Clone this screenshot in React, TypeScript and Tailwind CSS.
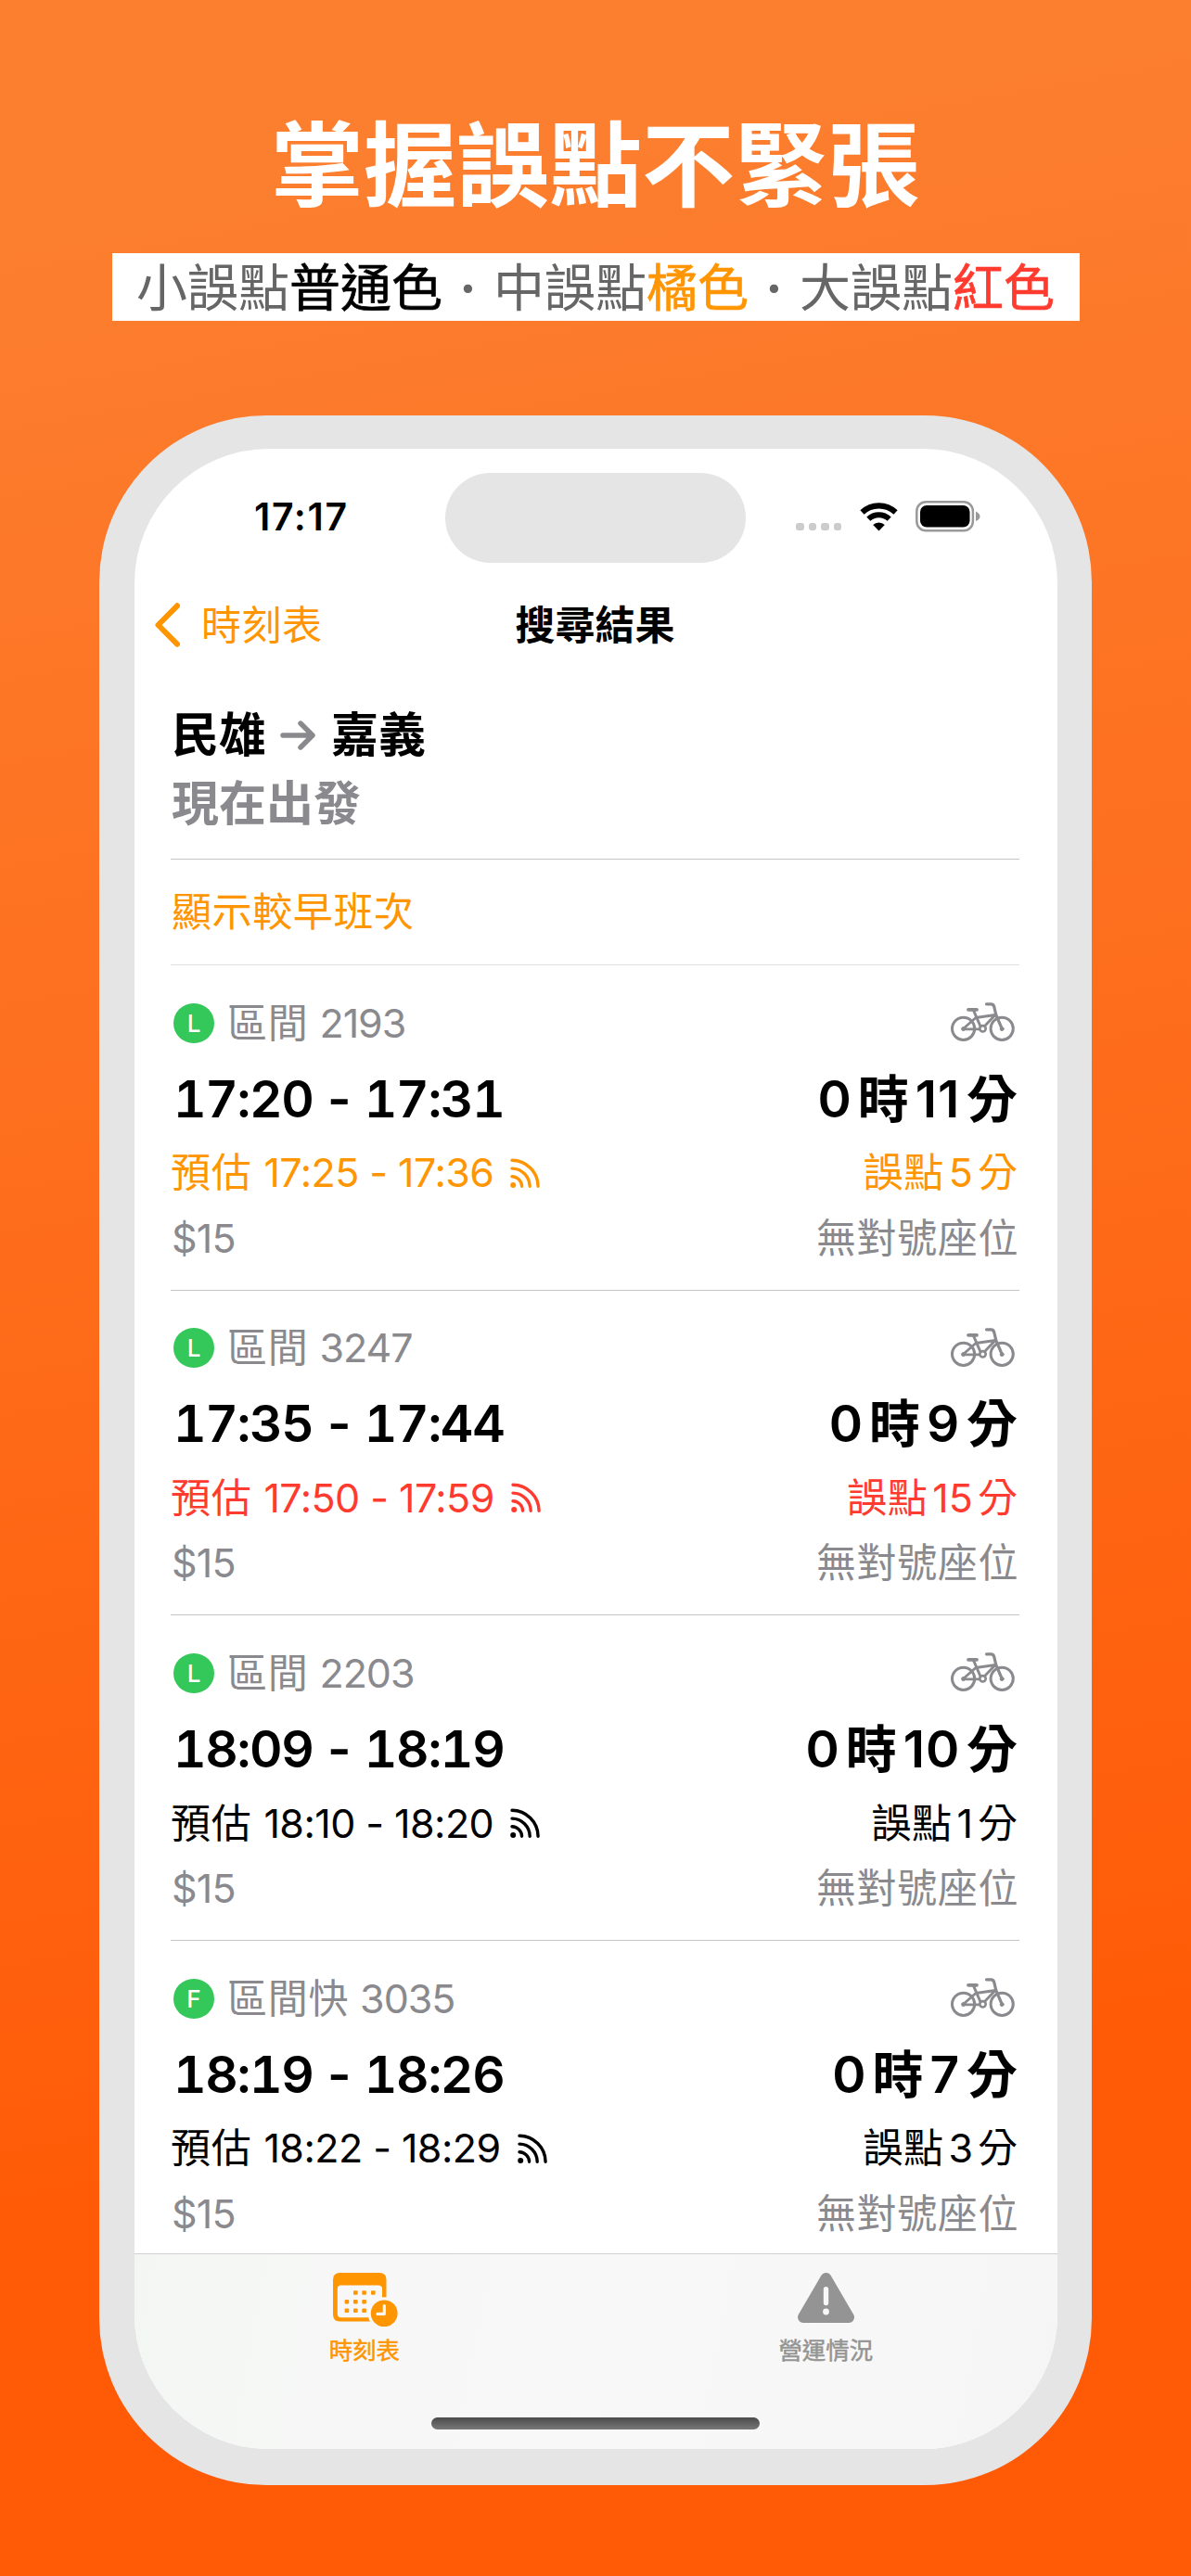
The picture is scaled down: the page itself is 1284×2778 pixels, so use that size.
import type { ReactNode } from "react";

type Tone = "normal" | "late" | "veryLate";

interface Train {
    badge: string;
    kind: string;
    number: string;
    time: string;
    hours: string;
    minutes: string;
    estimate: string;
    delay: string;
    tone: Tone;
}

const trains: Train[] = [
    { badge: "L", kind: "區間", number: "2193", time: "17:20 - 17:31", hours: "0", minutes: "11", estimate: "17:25 - 17:36", delay: "5", tone: "late" },
    { badge: "L", kind: "區間", number: "3247", time: "17:35 - 17:44", hours: "0", minutes: "9", estimate: "17:50 - 17:59", delay: "15", tone: "veryLate" },
    { badge: "L", kind: "區間", number: "2203", time: "18:09 - 18:19", hours: "0", minutes: "10", estimate: "18:10 - 18:20", delay: "1", tone: "normal" },
    { badge: "F", kind: "區間快", number: "3035", time: "18:19 - 18:26", hours: "0", minutes: "7", estimate: "18:22 - 18:29", delay: "3", tone: "normal" },
];

const toneClass: Record<Tone, string> = {
    normal: "text-black",
    late: "text-[#ff9500]",
    veryLate: "text-[#ff3b30]",
};

function WifiIcon() {
    return (
        <svg viewBox="0 0 41 32" className="w-[41px] h-[32px]">
            <path d="M2.5 11.6 A26 26 0 0 1 38.5 11.6" fill="none" stroke="black" strokeWidth="6.2" />
            <path d="M9.3 18.6 A16.4 16.4 0 0 1 31.7 18.6" fill="none" stroke="black" strokeWidth="6" />
            <path d="M20.5 31.5 L14.2 25 A9 9 0 0 1 26.8 25 Z" fill="black" />
        </svg>
    );
}

function BatteryIcon() {
    return (
        <svg viewBox="0 0 70 34" className="w-[70px] h-[34px]">
            <rect x="1.3" y="1.3" width="60.6" height="31" rx="10" fill="none" stroke="#999999" strokeWidth="2.5" />
            <rect x="5" y="5" width="53.5" height="23.5" rx="7" fill="black" />
            <path d="M65 11.5 C71 14.5 71 19.5 65 22 Z" fill="#999999" />
        </svg>
    );
}

function FeedIcon() {
    return (
        <svg viewBox="0 0 32 32" className="w-[32px] h-[32px]" fill="none" stroke="currentColor" strokeWidth="3.4" strokeLinecap="round">
            <circle cx="3.2" cy="29" r="3" fill="currentColor" stroke="none" />
            <path d="M2 19.7 A11 11 0 0 1 12.6 30.2" />
            <path d="M2 11.1 A19.5 19.5 0 0 1 21.2 30.2" />
            <path d="M2 2.2 A28.4 28.4 0 0 1 30.1 30.2" />
        </svg>
    );
}

function BikeIcon() {
    return (
        <svg viewBox="0 0 69 42" className="w-[69px] h-[42px]" fill="none" stroke="#8a8a8e" strokeLinecap="round" strokeLinejoin="round">
            <circle cx="13.6" cy="28.3" r="12.1" strokeWidth="3" />
            <circle cx="55.2" cy="28.3" r="12.1" strokeWidth="3" />
            <path d="M13.6 28.8 H33.5 L48 13.5 L27 16.5 L13.6 28.3" strokeWidth="2.8" />
            <path d="M19 7.8 H28" strokeWidth="3.8" />
            <path d="M24.5 8.5 L32.5 27" strokeWidth="3" />
            <path d="M38.5 1.8 H43.5 Q46 1.8 46.8 4.8 L48.8 13.5 L55.2 28.3" strokeWidth="3.2" />
            <circle cx="34.5" cy="28.3" r="3.2" strokeWidth="2.6" fill="white" />
            <circle cx="13.6" cy="28.6" r="2" strokeWidth="1" fill="#8a8a8e" />
            <circle cx="55.2" cy="28.6" r="2" strokeWidth="1" fill="#8a8a8e" />
        </svg>
    );
}

function CalendarClockIcon() {
    return (
        <svg viewBox="0 0 70 58" className="w-[70px] h-[58px]">
            <path
                fillRule="evenodd"
                fill="#ff9500"
                d="M7.5 0 H50 Q57.5 0 57.5 7.5 V52.5 H7.5 Q0 52.5 0 45 V7.5 Q0 0 7.5 0 Z M8.5 13.5 Q4.8 13.5 4.8 17 V44.5 Q4.8 48.2 8.5 48.2 H53 V17 Q53 13.5 49 13.5 Z"
            />
            <circle cx="55.2" cy="43.8" r="17.6" fill="#f7f8f7" />
            <g fill="#ff9500">
                {[22, 31.3, 41].map((x) => <rect key={x} x={x} y="19.2" width="4.6" height="4.6" rx="1" />)}
                {[12.6, 22, 31.3].map((x) => <rect key={x} x={x} y="29" width="4.6" height="4.6" rx="1" />)}
                {[12.6, 22, 31.3].map((x) => <rect key={x} x={x} y="38.4" width="4.6" height="4.6" rx="1" />)}
            </g>
            <circle cx="55.2" cy="43.8" r="14.4" fill="#ff9500" />
            <path d="M55.3 35.6 V44.4 H48" fill="none" stroke="#f7f8f7" strokeWidth="3.2" strokeLinecap="round" strokeLinejoin="round" />
        </svg>
    );
}

function WarningIcon() {
    return (
        <svg viewBox="0 0 61 54" className="w-[61px] h-[54px]">
            <path d="M30.5 6 L55 48 H6 Z" fill="#939493" stroke="#939493" strokeWidth="12" strokeLinejoin="round" />
            <path d="M30.5 17.8 V32.5" stroke="#f8f8f8" strokeWidth="5.4" strokeLinecap="round" />
            <circle cx="30.5" cy="42" r="3.4" fill="#f8f8f8" />
        </svg>
    );
}

function StatusBar() {
    return (
        <div className="relative h-[122px]">
            <span className="absolute left-[129px] top-[48px] leading-[50px] text-[41px] font-semibold tracking-[1.6px]">17:17</span>
            <div className="absolute left-[335px] top-[26px] w-[324px] h-[97px] rounded-full bg-[#e5e5e5]" />
            <div className="absolute left-[713px] top-[80px] flex gap-[5px]">
                {[0, 1, 2, 3].map((i) => (
                    <i key={i} className="w-[8.6px] h-[8px] rounded-[3px] bg-[#cccccc]" />
                ))}
            </div>
            <div className="absolute left-[782px] top-[57px]"><WifiIcon /></div>
            <div className="absolute left-[842px] top-[56px]"><BatteryIcon /></div>
        </div>
    );
}

function NavBar() {
    return (
        <div className="relative h-[136px] flex items-center justify-center">
            <div className="absolute left-[21px] top-0 h-full flex items-center text-[#ff9500]">
                <svg viewBox="0 0 28 48" className="w-[28px] h-[48px]">
                    <path d="M25 3.3 L4.5 24 L25 44.7" fill="none" stroke="currentColor" strokeWidth="6" strokeLinecap="round" strokeLinejoin="round" />
                </svg>
                <span className="ml-[23px] text-[43px] leading-[60px] tracking-[0.5px]">時刻表</span>
            </div>
            <span className="mr-[2px] text-[43px] leading-[60px] font-bold">搜尋結果</span>
        </div>
    );
}

/* One line of a train row: left part and right part */
function Line({ className, children }: { className: string; children: ReactNode }) {
    return <div className={`flex items-center justify-between whitespace-nowrap ${className}`}>{children}</div>;
}

function TrainRow({ train }: { train: Train }) {
    return (
        <div className="h-[350.7px] shrink-0 border-b border-[#c6c6c8] pt-[32px]">
            <Line className="h-[60px] text-[43px] text-[#8a8a8e]">
                <div className="flex items-center">
                    <span className="ml-[3px] w-[44px] h-[43px] rounded-full bg-[#34c759] text-white text-[26px] font-medium flex items-center justify-center">
                        {train.badge}
                    </span>
                    <span className="ml-[14px] tracking-[0.7px]">{train.kind}</span>
                    <span className="ml-[12px] tracking-[-1px]">{train.number}</span>
                </div>
                <div className="mr-[5px] -mt-[2px]"><BikeIcon /></div>
            </Line>
            <Line className="mt-[12px] h-[80px] text-[55px] font-semibold">
                <span className="ml-[3px] tabular-nums tracking-[-1.3px] [word-spacing:-3px]">{train.time}</span>
                <span className="flex items-center gap-[7px] mr-[2px]">
                    <span>{train.hours}</span>
                    <span>時</span>
                    <span className="tracking-[0.8px] [font-kerning:none]">{train.minutes}</span>
                    <span>分</span>
                </span>
            </Line>
            <Line className={`h-[79px] text-[43px] ${toneClass[train.tone]}`}>
                <div className="flex items-center">
                    <span className="tracking-[0.7px]">預估</span>
                    <span className="ml-[13px] tracking-[-0.55px]">{train.estimate}</span>
                    <span className="ml-[18px]"><FeedIcon /></span>
                </div>
                <span className="flex items-center gap-[5px] mr-[2px]">
                    <span className="tracking-[0.5px]">誤點</span>
                    <span>{train.delay}</span>
                    <span>分</span>
                </span>
            </Line>
            <Line className="h-[62px] text-[43px] text-[#8a8a8e]">
                <span className="ml-[1px] tracking-[-0.8px]">$15</span>
                <span className="tracking-[0.6px] mr-[1px]">無對號座位</span>
            </Line>
        </div>
    );
}

function TabBar() {
    return (
        <div className="absolute left-0 bottom-0 w-full h-[211px] border-t border-[#d0d0d1] bg-[#f7f7f7] bg-[linear-gradient(100deg,#f3f7f4_0%,#f6f7f6_20%,#f8f8f8_50%,#f7f7f7_80%,#f4f5f4_100%)]">
            <div className="grid grid-cols-2 h-full text-[25.4px] leading-[36px] [-webkit-text-stroke:0.5px]">
                <div className="flex flex-col items-center pt-[20px] text-[#ff9500]">
                    <CalendarClockIcon />
                    <span className="mt-[8px] mr-[2px]">時刻表</span>
                </div>
                <div className="flex flex-col items-center pt-[20px] pr-[2px] text-[#939493]">
                    <WarningIcon />
                    <span className="mt-[12px]">營運情況</span>
                </div>
            </div>
            {/* Home indicator */}
            <div className="absolute left-[320px] bottom-[21px] w-[354px] h-[13px] rounded-full bg-linear-to-b from-[#4b4b4b] to-[#787878]" />
        </div>
    );
}

function Dot() {
    return <span className="inline-block w-[55px] text-center font-bold">·</span>;
}

export default function App() {
    return (
        <div className="w-[1284px] h-[2778px] overflow-hidden flex flex-col items-center bg-[linear-gradient(170deg,#fc7e2f_9%,#ff5b07_80%)] font-['Inter','Noto_Sans_CJK_TC',sans-serif] text-black">
            <h1 className="mt-[105px] h-[148px] leading-[148px] text-[100px] font-bold text-white">掌握誤點不緊張</h1>
            <div className="mt-[20px] w-[1043px] h-[73px] leading-[75px] bg-white text-[55px] text-center whitespace-nowrap text-[#666666]">
                小誤點<span className="text-black [-webkit-text-stroke:0.7px]">普通色</span>
                <Dot />
                中誤點<span className="text-[#ff9500] [-webkit-text-stroke:0.7px]">橘色</span>
                <Dot />
                大誤點<span className="text-[#ff3b30] [-webkit-text-stroke:0.7px]">紅色</span>
            </div>

            {/* Phone */}
            <div className="mt-[102px] w-[1070px] h-[2232px] shrink-0 rounded-[180px] bg-[#e5e5e5] pt-[36px] pl-[38px]">
                <div className="relative w-[995px] h-[2157px] rounded-[145px] bg-white overflow-hidden flex flex-col">
                    <StatusBar />
                    <NavBar />
                    <div className="ml-[39px] w-[915px]">
                        <div className="h-[185px] border-b border-[#c6c6c8] pt-[14px] text-[51px] leading-[74px] font-bold">
                            <div className="flex items-center ml-[1px]">
                                <span>民雄</span>
                                <svg viewBox="0 0 38 32" className="ml-[15px] mr-[17px] w-[38px] h-[32px]" fill="none" stroke="#8a8a8e" strokeWidth="5.4" strokeLinecap="round" strokeLinejoin="round">
                                    <path d="M3 16 H34 M22 3 L35 16 L22 29" />
                                </svg>
                                <span>嘉義</span>
                            </div>
                            <div className="ml-[1px] text-[#8a8a8e]">現在出發</div>
                        </div>
                        <div className="h-[114px] border-b border-[#e0e0e2] flex items-center text-[43px] tracking-[0.6px] text-[#ff9500]">
                            <span className="ml-[1px]">顯示較早班次</span>
                        </div>
                        {trains.map((train) => (
                            <TrainRow key={train.number} train={train} />
                        ))}
                    </div>
                    <TabBar />
                </div>
            </div>
        </div>
    );
}
